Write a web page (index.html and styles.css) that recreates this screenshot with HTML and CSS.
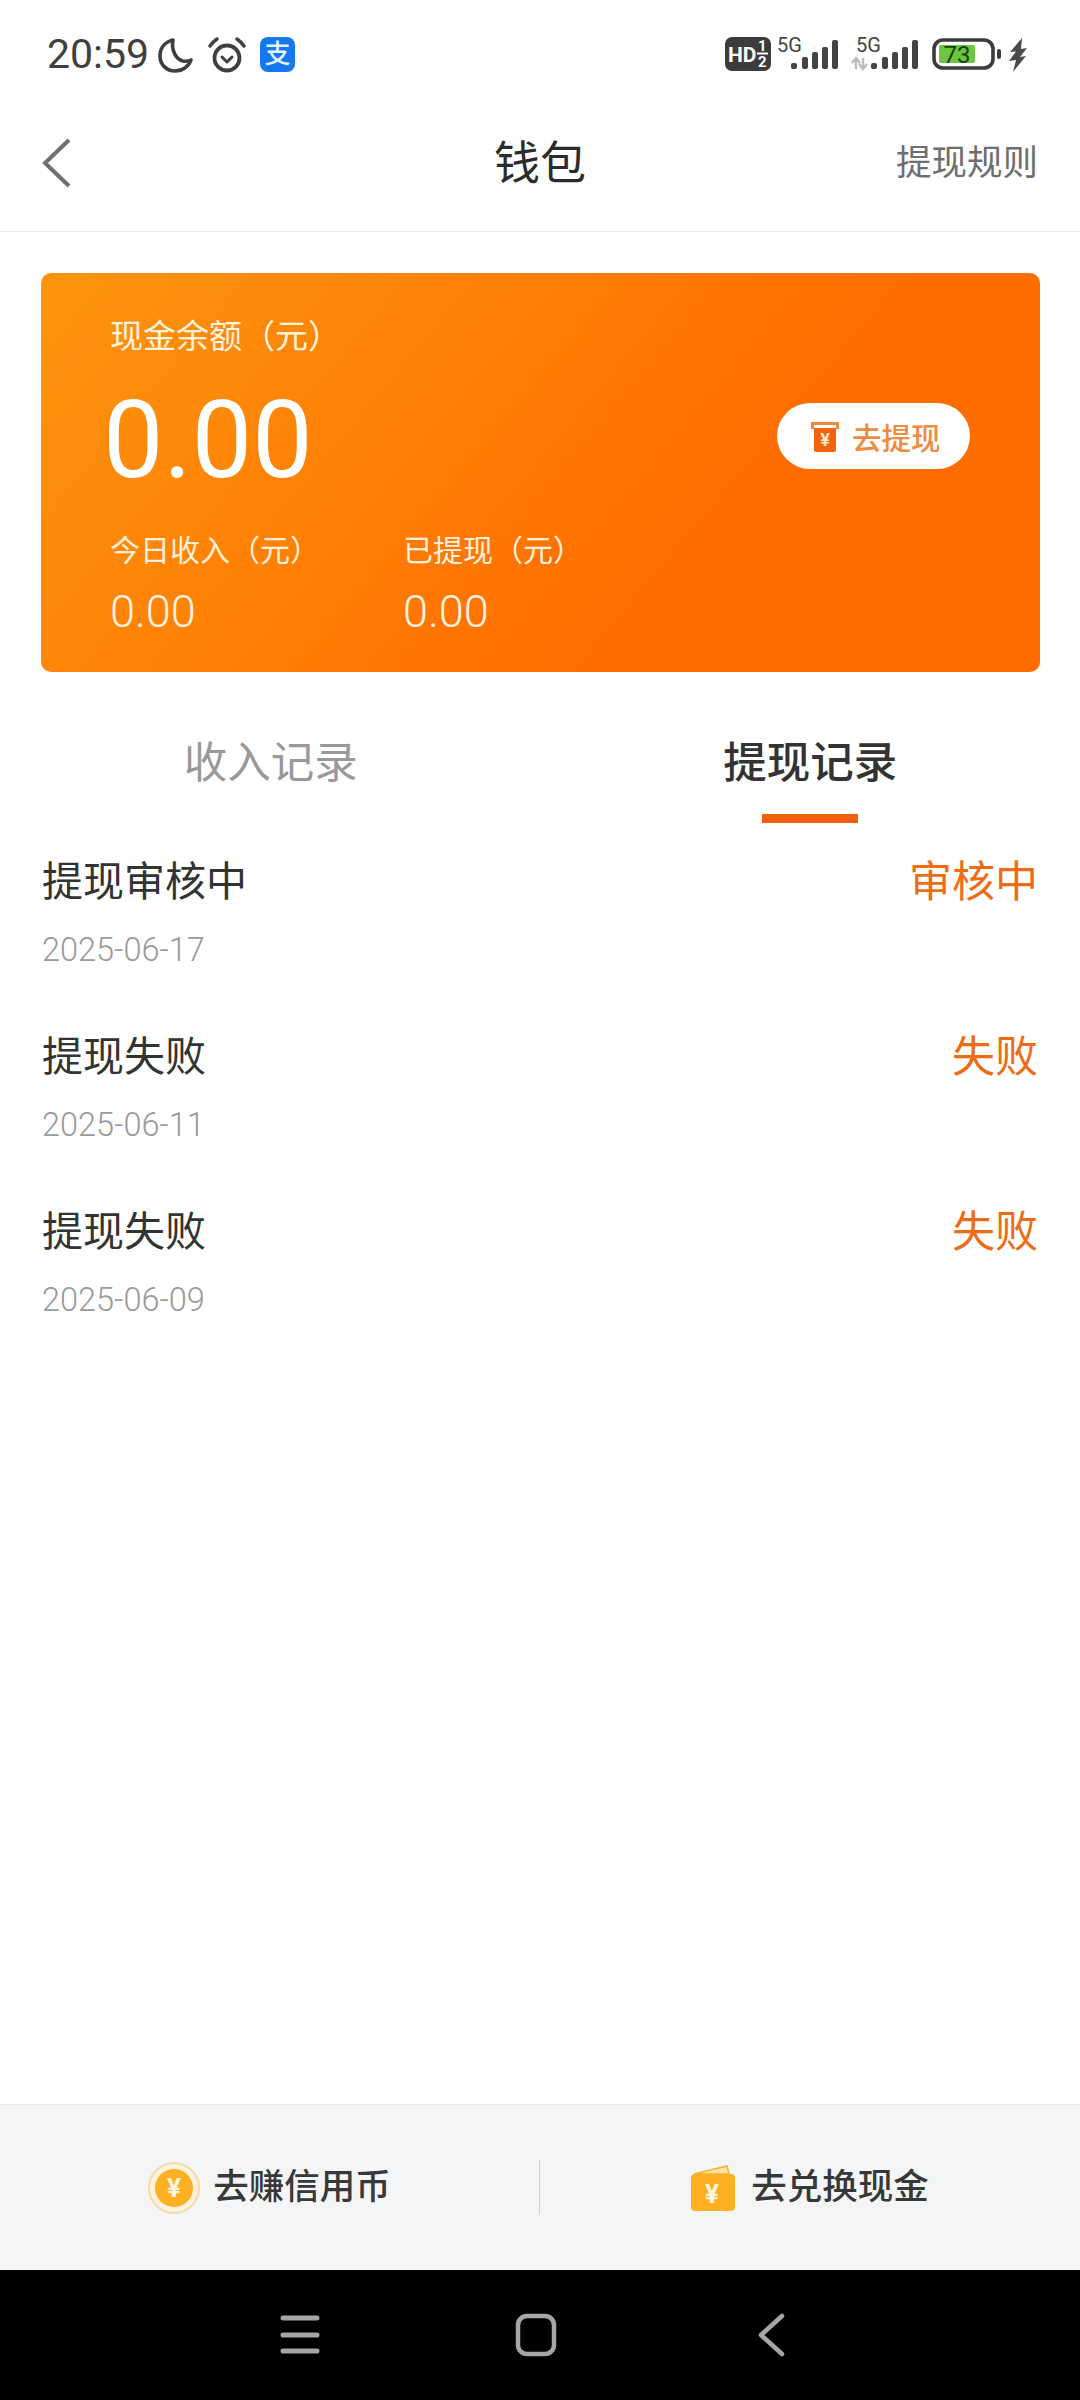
FILE: index.html
```html
<!DOCTYPE html>
<html lang="zh-CN">
<head>
<meta charset="utf-8">
<title>钱包</title>
<link rel="stylesheet" href="styles.css">
</head>
<body>
<div class="page">
  <div class="status">
    <span class="time">20:59</span>
    <svg class="moon" viewBox="0 0 36 36"><path d="M15 3C7 5 2 11 2 19c0 9 7 15 15 15 8 0 14-5 16-11-2 1-5 1.500-8 1-7-1.500-12-11-10-21z" fill="none" stroke="#3f3f3f" stroke-width="3.600" stroke-linejoin="round"/></svg>
    <svg class="alarm" viewBox="0 0 38 36"><circle cx="19" cy="21" r="12.500" fill="none" stroke="#3f3f3f" stroke-width="3.800"/><path d="M14 20l5 5 5-5" fill="none" stroke="#3f3f3f" stroke-width="3" stroke-linecap="round" stroke-linejoin="round"/><path d="M2 9C4 6 6 4 9 2M36 9c-2-3-4-5-7-7" fill="none" stroke="#3f3f3f" stroke-width="3.400" stroke-linecap="round"/></svg>
    <span class="alipay">支</span>
    <div class="status-right">
      <svg class="hd" viewBox="0 0 46 34"><rect width="46" height="34" rx="7" fill="#3c3c3c"/><text x="3" y="25" class="hd-text">HD</text><text x="33" y="14" class="hd-num">1</text><text x="33" y="30" class="hd-num">2</text><rect x="32" y="15.500" width="11" height="2" fill="#fff"/></svg>
      <svg class="sim-a" viewBox="0 -8 68 44"><text x="0" y="15" class="sim-text">5G</text><g fill="#444"><rect x="14" y="26" width="6" height="6" rx="2"/><rect x="25" y="20" width="6" height="12" rx="2"/><rect x="35" y="15" width="6" height="17" rx="2"/><rect x="45" y="10" width="6" height="22" rx="2"/><rect x="55" y="3" width="6" height="29" rx="2"/></g></svg>
      <svg class="sim-b" viewBox="0 -8 75 44"><text x="5" y="15" class="sim-text">5G</text><path d="M5 21v11M1 26l4-5 4 5M12 32V21M8 27l4 5 4-5" fill="none" stroke="#bdbdbd" stroke-width="2.400"/><g fill="#444"><rect x="20" y="26" width="6" height="6" rx="2"/><rect x="31" y="20" width="6" height="12" rx="2"/><rect x="41" y="15" width="6" height="17" rx="2"/><rect x="51" y="10" width="6" height="22" rx="2"/><rect x="61" y="3" width="6" height="29" rx="2"/></g></svg>
      <svg class="battery" viewBox="0 0 71 36"><rect x="2" y="3" width="59" height="28" rx="9" fill="#fff" stroke="#3c3c3c" stroke-width="3.600"/><rect x="7" y="8" width="36" height="18" rx="2" fill="#6cc63f"/><text x="25" y="26" class="bat-text">73</text><rect x="65" y="12" width="4" height="10" rx="2" fill="#3c3c3c"/></svg>
      <svg class="bolt" viewBox="0 0 18 36"><path d="M13 1L1 15l6-.5L0 24l7-1-3 12 13-16-6 1 7-9-6 1z" fill="#4a4a4a"/></svg>
    </div>
  </div>

  <header class="nav-head">
    <svg class="back" viewBox="0 0 30 52"><path d="M27 3L3 26l24 23" fill="none" stroke="#707070" stroke-width="4"/></svg>
    <h1 class="title">钱包</h1>
    <a class="rules">提现规则</a>
  </header>

  <section class="card">
    <div class="card-top">
      <div class="balance">
        <div class="balance-label">现金余额（元）</div>
        <div class="balance-value">0.00</div>
      </div>
      <div class="withdraw">
        <svg class="withdraw-icon" viewBox="0 0 30 32"><path d="M1 2h28v7h-3V5H4v4H1z" fill="#f0883a"/><path d="M4 8h22v22a2 2 0 0 1-2 2H6a2 2 0 0 1-2-2z" fill="#f0650e"/><text x="15" y="26" class="yen-small">¥</text></svg>
        <span>去提现</span>
      </div>
    </div>
    <div class="card-sub">
      <div class="stat">
        <div class="stat-label">今日收入（元）</div>
        <div class="stat-value">0.00</div>
      </div>
      <div class="stat">
        <div class="stat-label">已提现（元）</div>
        <div class="stat-value">0.00</div>
      </div>
    </div>
  </section>

  <div class="tabs">
    <div class="tab">收入记录</div>
    <div class="tab tab-active">提现记录</div>
  </div>

  <ul class="records">
    <li class="record">
      <div><div class="record-title">提现审核中</div><div class="record-date">2025-06-17</div></div>
      <div class="record-state">审核中</div>
    </li>
    <li class="record">
      <div><div class="record-title">提现失败</div><div class="record-date">2025-06-11</div></div>
      <div class="record-state">失败</div>
    </li>
    <li class="record">
      <div><div class="record-title">提现失败</div><div class="record-date">2025-06-09</div></div>
      <div class="record-state">失败</div>
    </li>
  </ul>

  <footer class="actions">
    <div class="action">
      <svg class="coin" viewBox="0 0 52 52"><circle cx="26" cy="26" r="25" fill="#fbf1dc" stroke="#f3dca8" stroke-width="2"/><circle cx="26" cy="26" r="19" fill="#fdb022"/><text x="26" y="35" class="yen">¥</text></svg>
      <span>去赚信用币</span>
    </div>
    <div class="divider"></div>
    <div class="action action-wide">
      <svg class="wallet" viewBox="0 0 44 46"><path d="M3 9L36 1l2 8z" fill="#fbe3ae" stroke="#fdb022" stroke-width="1.500"/><rect y="9" width="44" height="37" rx="4" fill="#fdb022"/><text x="21" y="38" class="yen">¥</text></svg>
      <span>去兑换现金</span>
    </div>
  </footer>

  <nav class="sysnav">
    <svg class="sys-icon" viewBox="0 0 48 48"><path d="M7 7h34M7 24h34M7 40h34" stroke="#a6a6a6" stroke-width="5" stroke-linecap="round" fill="none"/></svg>
    <svg class="sys-icon" viewBox="0 0 48 48"><rect x="6" y="5" width="36" height="38" rx="9" fill="none" stroke="#a6a6a6" stroke-width="4.500"/></svg>
    <svg class="sys-icon" viewBox="0 0 48 48"><path d="M34 5L13 24l21 19" fill="none" stroke="#a6a6a6" stroke-width="4.500" stroke-linecap="round" stroke-linejoin="round"/></svg>
  </nav>
</div>
</body>
</html>
```

FILE: styles.css
```css
* { box-sizing: border-box; margin: 0; padding: 0; }
html, body { width: 1080px; height: 2400px; background: #fff; }
body { font-family: Roboto, "Noto Sans CJK SC", sans-serif; color: #333; }
.page { width: 1080px; height: 2400px; display: flex; flex-direction: column; overflow: hidden; }

/* status bar */
.status { height: 92px; padding: 37px 0 0 47px; display: flex; align-items: flex-start; }
.time { font-size: 41px; line-height: 35px; color: #3f3f3f; width: 111px; }
.moon { width: 36px; height: 36px; margin-right: 14px; }
.alarm { width: 38px; height: 36px; margin-right: 14px; }
.alipay { width: 35px; height: 35px; border-radius: 8px; background: #1677ee; color: #e4f1ff; font-size: 26px; line-height: 35px; text-align: center; font-weight: 500; }
.status-right { margin-left: auto; padding-right: 53px; display: flex; gap: 6px; }
.hd { width: 46px; height: 34px; }
.sim-a { width: 68px; height: 44px; margin-top: -8px; }
.sim-b { width: 75px; height: 44px; margin-top: -8px; }
.battery { width: 71px; height: 36px; }
.bolt { width: 18px; height: 36px; }
.hd-text { font-size: 21px; font-weight: 700; fill: #fff; font-family: Roboto, sans-serif; }
.hd-num { font-size: 15px; font-weight: 700; fill: #fff; font-family: Roboto, sans-serif; }
.sim-text { font-size: 20px; fill: #444; font-family: Roboto, sans-serif; }
.bat-text { font-size: 24px; fill: #17400a; text-anchor: middle; font-family: Roboto, sans-serif; }

/* header */
.nav-head { height: 140px; padding: 2px 42px 0 42px; border-bottom: 1px solid #e6e6e6; display: grid; grid-template-columns: 1fr auto 1fr; align-items: center; }
.back { width: 30px; height: 52px; }
.title { font-size: 46px; line-height: 60px; font-weight: 400; color: #2b2b2b; }
.rules { justify-self: end; font-size: 35.500px; line-height: 50px; color: #6e6e6e; }

/* card */
.card { margin: 41px 40px 0 41px; height: 399px; padding: 41px 70px 0 69px; border-radius: 10px; background: linear-gradient(130deg, #fd9510 0%, #ff7f05 38%, #ff6c00 68%); color: #fff; }
.card-top { display: flex; justify-content: space-between; align-items: flex-start; }
.balance-label { font-size: 33px; line-height: 46px; color: #fff3df; }
.balance-value { font-size: 107.500px; line-height: 120px; margin: 20px 0 0 -7px; font-weight: 400; }
.withdraw { margin-top: 89px; width: 193px; height: 66px; padding-left: 33px; border-radius: 33px; background: #fff; display: flex; align-items: center; gap: 12px; font-size: 29.500px; font-weight: 500; color: #f08a3e; }
.withdraw-icon { width: 30px; height: 32px; }
.yen-small { font-size: 18px; font-weight: 700; fill: #ffe9d2; text-anchor: middle; font-family: Roboto, sans-serif; }
.card-sub { margin-top: 31px; display: flex; }
.stat { width: 293px; }
.stat-label { font-size: 30px; line-height: 40px; color: #fff0dc; }
.stat-value { margin-top: 16px; font-size: 45px; line-height: 50px; font-weight: 300; color: #fff3e4; }

/* tabs */
.tabs { margin-top: 62px; padding-left: 1px; display: grid; grid-template-columns: 1fr 1fr; }
.tab { height: 89px; font-size: 43.500px; line-height: 60px; color: #999; text-align: center; }
.tab-active { color: #333; font-weight: 500; display: flex; flex-direction: column; align-items: center; }
.tab-active::after { content: ""; width: 96px; height: 9px; margin-top: 20px; background: #f0620a; }

/* records */
.records { list-style: none; margin-top: 34px; padding: 0 42px; display: flex; flex-direction: column; gap: 60px; }
.record { display: flex; justify-content: space-between; }
.record-title { font-size: 41px; line-height: 50px; color: #333; }
.record-date { margin-top: 21px; font-size: 32.500px; line-height: 44px; color: #9a9a9a; font-weight: 300; }
.record-state { font-size: 43px; line-height: 50px; color: #ef6c17; }

/* footer */
.actions { margin-top: auto; height: 166px; border-top: 1px solid #e8e8e8; background: #f4f5f7; display: grid; grid-template-columns: 539px 1px 1fr; align-items: center; }
.divider { height: 55px; background: #cfcfcf; }
.action { display: flex; justify-content: center; align-items: center; gap: 13px; font-size: 35.500px; line-height: 48px; font-weight: 500; color: #383838; }
.action-wide { gap: 16px; }
.action span { margin-top: -1px; }
.coin { width: 52px; height: 52px; }
.wallet { width: 44px; height: 46px; }
.yen { font-size: 26px; font-weight: 700; fill: #fff6e0; text-anchor: middle; font-family: Roboto, sans-serif; }

/* system navigation */
.sysnav { height: 130px; padding-right: 8px; background: #000; display: flex; justify-content: center; align-items: center; gap: 188px; }
.sys-icon { width: 48px; height: 48px; }
```
